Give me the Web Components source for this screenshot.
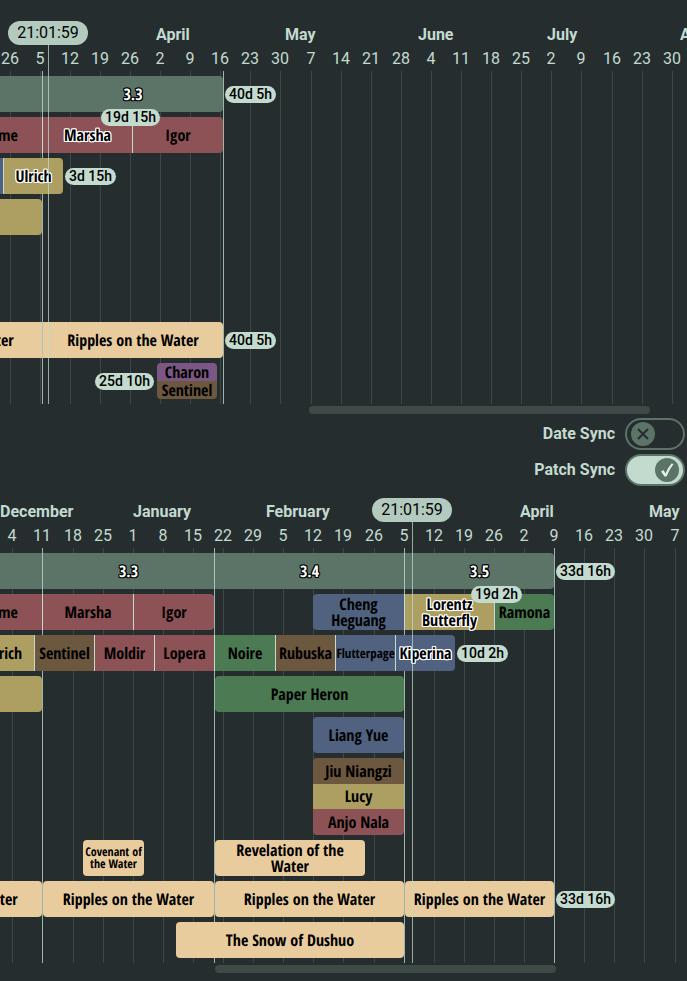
<!DOCTYPE html>
<html lang="en">
<head>
<meta charset="utf-8">
<meta name="viewport" content="width=device-width, initial-scale=1">
<title>Version timeline</title>
<style>
  :root {
    --bg: #262d2f;
    --mint: #c3dbcf;
    --moss: #5c7368;
    --grid: #3c4746;
    --track: #3d4a46;
  }
  body {
    margin: 0;
    background: var(--bg);
    color: var(--mint);
    font: 400 16px/20px Roboto, sans-serif;
  }
</style>
</head>
<body>
<timeline-page>
  <time-line>
    <month-label slot="months" from="156" to="285">April</month-label>
    <month-label slot="months" from="285" to="418">May</month-label>
    <month-label slot="months" from="418" to="547">June</month-label>
    <month-label slot="months" from="547" to="680">July</month-label>
    <month-label slot="months" from="680" to="813">August</month-label>

    <week-tick slot="weeks" from="-5" to="25">26</week-tick>
    <week-tick slot="weeks" from="25" to="55">5</week-tick>
    <week-tick slot="weeks" from="55" to="85">12</week-tick>
    <week-tick slot="weeks" from="85" to="115">19</week-tick>
    <week-tick slot="weeks" from="115" to="145">26</week-tick>
    <week-tick slot="weeks" from="145" to="175">2</week-tick>
    <week-tick slot="weeks" from="175" to="205">9</week-tick>
    <week-tick slot="weeks" from="205" to="235">16</week-tick>
    <week-tick slot="weeks" from="235" to="265">23</week-tick>
    <week-tick slot="weeks" from="265" to="295">30</week-tick>
    <week-tick slot="weeks" from="296" to="326">7</week-tick>
    <week-tick slot="weeks" from="326" to="356">14</week-tick>
    <week-tick slot="weeks" from="356" to="386">21</week-tick>
    <week-tick slot="weeks" from="386" to="416">28</week-tick>
    <week-tick slot="weeks" from="416" to="446">4</week-tick>
    <week-tick slot="weeks" from="446" to="476">11</week-tick>
    <week-tick slot="weeks" from="476" to="506">18</week-tick>
    <week-tick slot="weeks" from="506" to="536">25</week-tick>
    <week-tick slot="weeks" from="536" to="566">2</week-tick>
    <week-tick slot="weeks" from="566" to="596">9</week-tick>
    <week-tick slot="weeks" from="597" to="627">16</week-tick>
    <week-tick slot="weeks" from="627" to="657">23</week-tick>
    <week-tick slot="weeks" from="657" to="687">30</week-tick>

    <version-line slot="lines" at="42"></version-line>
    <version-line slot="lines" at="223"></version-line>

    <time-lane>
      <time-bar from="0" to="42" tone="moss"></time-bar>
      <time-bar from="42" to="223" tone="moss" split end version>3.3<time-badge slot="badge" side="after">40d 5h</time-badge></time-bar>
    </time-lane>
    <time-lane>
      <time-bar from="-2" to="42" tone="red" start-text>me</time-bar>
      <time-bar from="42" to="132" tone="red" split active>Marsha<time-badge slot="badge" side="corner">19d 15h</time-badge></time-bar>
      <time-bar from="132" to="223" tone="red" split end>Igor</time-bar>
    </time-lane>
    <time-lane>
      <time-bar from="0" to="3" tone="blue"></time-bar>
      <time-bar from="3" to="63" tone="gold" split end active>Ulrich<time-badge slot="badge" side="after">3d 15h</time-badge></time-bar>
    </time-lane>
    <time-lane>
      <time-bar from="0" to="42" tone="gold" end></time-bar>
    </time-lane>
    <time-lane></time-lane>
    <time-lane></time-lane>
    <time-lane>
      <time-bar from="-146" to="42" tone="sand">Ripples on the Water</time-bar>
      <time-bar from="42" to="223" tone="sand" split end>Ripples on the Water<time-badge slot="badge" side="after">40d 5h</time-badge></time-bar>
    </time-lane>
    <time-lane>
      <bar-stack from="157" to="217">
        <time-bar tone="purple">Charon</time-bar>
        <time-bar tone="brown">Sentinel</time-bar>
        <time-badge slot="badge" side="before">25d 10h</time-badge>
      </bar-stack>
    </time-lane>

    <now-marker slot="now" at="48">21:01:59</now-marker>
    <scroll-track slot="scroll" before="309" thumb="341" after="37"></scroll-track>
  </time-line>

  <sync-options>
    <sync-switch label="Date Sync"></sync-switch>
    <sync-switch label="Patch Sync" on></sync-switch>
  </sync-options>

  <time-line>
    <month-label slot="months" from="0" to="133">December</month-label>
    <month-label slot="months" from="133" to="266">January</month-label>
    <month-label slot="months" from="266" to="387">February</month-label>
    <month-label slot="months" from="520" to="649">April</month-label>
    <month-label slot="months" from="649" to="782">May</month-label>

    <week-tick slot="weeks" from="-3" to="27">4</week-tick>
    <week-tick slot="weeks" from="27" to="57">11</week-tick>
    <week-tick slot="weeks" from="58" to="88">18</week-tick>
    <week-tick slot="weeks" from="88" to="118">25</week-tick>
    <week-tick slot="weeks" from="118" to="148">1</week-tick>
    <week-tick slot="weeks" from="148" to="178">8</week-tick>
    <week-tick slot="weeks" from="178" to="208">15</week-tick>
    <week-tick slot="weeks" from="208" to="238">22</week-tick>
    <week-tick slot="weeks" from="238" to="268">29</week-tick>
    <week-tick slot="weeks" from="268" to="298">5</week-tick>
    <week-tick slot="weeks" from="298" to="328">12</week-tick>
    <week-tick slot="weeks" from="328" to="358">19</week-tick>
    <week-tick slot="weeks" from="359" to="389">26</week-tick>
    <week-tick slot="weeks" from="389" to="419">5</week-tick>
    <week-tick slot="weeks" from="419" to="449">12</week-tick>
    <week-tick slot="weeks" from="449" to="479">19</week-tick>
    <week-tick slot="weeks" from="479" to="509">26</week-tick>
    <week-tick slot="weeks" from="509" to="539">2</week-tick>
    <week-tick slot="weeks" from="539" to="569">9</week-tick>
    <week-tick slot="weeks" from="569" to="599">16</week-tick>
    <week-tick slot="weeks" from="599" to="629">23</week-tick>
    <week-tick slot="weeks" from="629" to="659">30</week-tick>
    <week-tick slot="weeks" from="660" to="690">7</week-tick>

    <version-line slot="lines" at="42"></version-line>
    <version-line slot="lines" at="214"></version-line>
    <version-line slot="lines" at="404"></version-line>
    <version-line slot="lines" at="554"></version-line>

    <time-lane>
      <time-bar from="0" to="42" tone="moss"></time-bar>
      <time-bar from="42" to="214" tone="moss" split version>3.3</time-bar>
      <time-bar from="214" to="404" tone="moss" split version>3.4</time-bar>
      <time-bar from="404" to="554" tone="moss" split end version>3.5<time-badge slot="badge" side="after">33d 16h</time-badge></time-bar>
    </time-lane>
    <time-lane>
      <time-bar from="-2" to="42" tone="red" start-text>me</time-bar>
      <time-bar from="42" to="133" tone="red" split>Marsha</time-bar>
      <time-bar from="133" to="214" tone="red" split end>Igor</time-bar>
      <time-bar from="313" to="404" tone="blue" start>Cheng Heguang</time-bar>
      <time-bar from="404" to="494" tone="gold" split active>Lorentz Butterfly<time-badge slot="badge" side="corner">19d 2h</time-badge></time-bar>
      <time-bar from="494" to="554" tone="green" split end>Ramona</time-bar>
    </time-lane>
    <time-lane>
      <time-bar from="-26" to="34" tone="gold">Ulrich</time-bar>
      <time-bar from="34" to="94" tone="brown" split>Sentinel</time-bar>
      <time-bar from="94" to="154" tone="red" split>Moldir</time-bar>
      <time-bar from="154" to="214" tone="red" split>Lopera</time-bar>
      <time-bar from="214" to="275" tone="green" split>Noire</time-bar>
      <time-bar from="275" to="335" tone="brown" split>Rubuska</time-bar>
      <time-bar from="335" to="395" tone="blue" split medium>Flutterpage</time-bar>
      <time-bar from="395" to="455" tone="blue" split end active>Kiperina<time-badge slot="badge" side="after">10d 2h</time-badge></time-bar>
    </time-lane>
    <time-lane>
      <time-bar from="0" to="42" tone="gold" end></time-bar>
      <time-bar from="215" to="404" tone="green" start end>Paper Heron</time-bar>
    </time-lane>
    <time-lane>
      <time-bar from="313" to="404" tone="blue" start end>Liang Yue</time-bar>
    </time-lane>
    <time-lane>
      <bar-stack from="313" to="404">
        <time-bar tone="brown">Jiu Niangzi</time-bar>
        <time-bar tone="gold">Lucy</time-bar>
        <time-bar tone="red">Anjo Nala</time-bar>
      </bar-stack>
    </time-lane>
    <time-lane>
      <time-bar from="83" to="144" tone="sand" start end small>Covenant of the Water</time-bar>
      <time-bar from="215" to="365" tone="sand" start end>Revelation of the Water</time-bar>
    </time-lane>
    <time-lane>
      <time-bar from="-138" to="42" tone="sand" end>Ripples on the Water</time-bar>
      <time-bar from="43" to="214" tone="sand" start end>Ripples on the Water</time-bar>
      <time-bar from="215" to="404" tone="sand" start end>Ripples on the Water</time-bar>
      <time-bar from="405" to="554" tone="sand" start end>Ripples on the Water<time-badge slot="badge" side="after">33d 16h</time-badge></time-bar>
    </time-lane>
    <time-lane>
      <time-bar from="176" to="404" tone="sand" start end>The Snow of Dushuo</time-bar>
    </time-lane>

    <now-marker slot="now" at="412">21:01:59</now-marker>
    <scroll-track slot="scroll" before="215" thumb="341" after="131"></scroll-track>
  </time-line>
</timeline-page>

<script>
  const shadow = (host, html) => {
    const root = host.attachShadow({ mode: 'open' });
    const t = document.createElement('template');
    t.innerHTML = html;
    root.append(t.content.cloneNode(true));
    return root;
  };
  const num = (el, name) => Number(el.getAttribute(name) || 0);

  // An item with a time span; it follows its previous sibling in the same flex row.
  class SpanElement extends HTMLElement {
    connectedCallback() {
      if (!this.hasAttribute('to')) return;
      const prev = this.previousElementSibling;
      const same = prev && prev.localName === this.localName;
      this.style.setProperty('--gap', num(this, 'from') - (same ? num(prev, 'to') : 0) + 'px');
      this.style.setProperty('--span', num(this, 'to') - num(this, 'from') + 'px');
    }
  }

  customElements.define('timeline-page', class extends HTMLElement {
    constructor() {
      super();
      shadow(this, `<style>
        :host { display: block; padding: 12px 0 8px; overflow: hidden; }
        main { display: flex; flex-direction: column; }
      </style><main><slot></slot></main>`);
    }
  });

  customElements.define('time-line', class extends HTMLElement {
    constructor() {
      super();
      shadow(this, `<style>
        :host { display: block; }
        .chart { position: relative; padding-top: 13px; overflow: hidden; }
        .months { display: flex; height: 20px; margin-bottom: 4px; }
        .plot { display: grid; grid-template-columns: minmax(0, 1fr); }
        .weeks, .lines, .lanes { grid-area: 1 / 1; }
        .weeks { display: flex; }
        .lines { position: relative; margin-top: 22px; }
        .lanes { position: relative; display: grid; grid-template-columns: minmax(0, 1fr); gap: 5px; padding: 27px 0 5px; }
      </style>
      <section class="chart">
        <div class="months"><slot name="months"></slot></div>
        <div class="plot">
          <div class="weeks"><slot name="weeks"></slot></div>
          <div class="lines"><slot name="lines"></slot></div>
          <div class="lanes"><slot></slot></div>
        </div>
        <slot name="now"></slot>
      </section>
      <slot name="scroll"></slot>`);
    }
  });

  customElements.define('month-label', class extends SpanElement {
    constructor() {
      super();
      shadow(this, `<style>
        :host { flex: none; width: var(--span); margin-left: var(--gap); font-weight: 700; }
      </style><slot></slot>`);
    }
  });

  customElements.define('week-tick', class extends SpanElement {
    constructor() {
      super();
      shadow(this, `<style>
        :host { flex: none; display: flex; flex-direction: column; align-items: center; gap: 2px; width: var(--span); margin-left: var(--gap); }
        i { flex: 1; width: 1px; margin-left: 1px; background: var(--grid); }
      </style><span><slot></slot></span><i></i>`);
    }
  });

  customElements.define('version-line', class extends HTMLElement {
    constructor() {
      super();
      shadow(this, `<style>
        :host { position: absolute; top: 0; bottom: 0; left: var(--at); width: 1px; background: #9eb5ac; }
      </style>`);
    }
    connectedCallback() { this.style.setProperty('--at', num(this, 'at') + 'px'); }
  });

  customElements.define('now-marker', class extends HTMLElement {
    constructor() {
      super();
      shadow(this, `<style>
        :host { position: absolute; top: 9px; bottom: 0; left: var(--at); width: 1px; display: flex; flex-direction: column; opacity: .9; pointer-events: none; }
        time { flex: none; width: 80px; margin-left: -40px; border-radius: 12px; background: var(--mint); color: #000; line-height: 24px; text-align: center; }
        i { flex: 1; width: 1px; background: var(--mint); opacity: .8; }
      </style><time><slot></slot></time><i></i>`);
    }
    connectedCallback() { this.style.setProperty('--at', num(this, 'at') + 'px'); }
  });

  customElements.define('time-lane', class extends HTMLElement {
    constructor() {
      super();
      shadow(this, `<style>
        :host { display: flex; min-height: 36px; }
      </style><slot></slot>`);
    }
  });

  customElements.define('time-bar', class extends SpanElement {
    constructor() {
      super();
      shadow(this, `<style>
        :host {
          flex: none; position: relative; box-sizing: border-box;
          display: flex; align-items: center; justify-content: center;
          width: var(--span); margin-left: var(--gap); padding: 0 1px;
          background: var(--fill); color: #000; text-align: center;
          font: 700 16px/16px "Open Sans Condensed", "Open Sans", sans-serif;
          text-rendering: geometricPrecision;
        }
        :host([tone="moss"]) { --fill: #5c7368; }
        :host([tone="red"]) { --fill: #8d5255; }
        :host([tone="gold"]) { --fill: #ac9f61; }
        :host([tone="blue"]) { --fill: #50627f; }
        :host([tone="green"]) { --fill: #4b7a53; }
        :host([tone="brown"]) { --fill: #6c573f; }
        :host([tone="purple"]) { --fill: #7d5783; }
        :host([tone="sand"]) { --fill: #e9cc9d; }
        :host([split]) { border-left: 1px solid var(--mint); }
        :host([split][version]), :host([split][tone="sand"]) { border-color: #a9c4b8; }
        :host([start]) { border-top-left-radius: 4px; border-bottom-left-radius: 4px; }
        :host([end]) { border-top-right-radius: 4px; border-bottom-right-radius: 4px; }
        :host([start-text]) { justify-content: flex-start; padding: 0; }
        :host([medium]) { padding: 0; font-size: 13px; }
        :host([small]) { font-size: 12px; line-height: 12px; }
        :host([active]) span {
          text-shadow: 1px 0 #fff, -1px 0 #fff, 0 1px #fff, 0 -1px #fff, 1px 1px #fff, -1px -1px #fff, 1px -1px #fff, -1px 1px #fff;
        }
        :host([version]) span {
          color: #fff;
          text-shadow: 1px 0 #000, -1px 0 #000, 0 1px #000, 0 -1px #000, 1px 1px #000, -1px -1px #000, 1px -1px #000, -1px 1px #000;
        }
      </style><span><slot></slot></span><slot name="badge"></slot>`);
    }
  });

  customElements.define('bar-stack', class extends SpanElement {
    constructor() {
      super();
      shadow(this, `<style>
        :host { flex: none; position: relative; width: var(--span); margin-left: var(--gap); }
        div { display: grid; grid-auto-rows: minmax(18px, 1fr); height: 100%; border-radius: 4px; overflow: hidden; }
        :host(.tall) div { height: 77px; }
        ::slotted(time-bar) { width: auto; margin-left: 0; }
      </style><div><slot></slot></div><slot name="badge"></slot>`);
    }
    connectedCallback() {
      super.connectedCallback();
      queueMicrotask(() => this.classList.toggle('tall', this.querySelectorAll('time-bar').length > 2));
    }
  });

  customElements.define('time-badge', class extends HTMLElement {
    constructor() {
      super();
      shadow(this, `<style>
        :host {
          position: absolute; z-index: 1; padding: 0 4px; border-radius: 9px;
          background: var(--mint); color: #000; white-space: nowrap;
          font: 500 14px/17px Roboto, sans-serif; text-rendering: auto;
        }
        :host([side="after"]) { left: calc(100% + 2px); }
        :host([side="before"]) { right: calc(100% + 3px); top: 10px; }
        :host([side="corner"]) { right: -28px; top: -8px; }
      </style><slot></slot>`);
    }
  });

  customElements.define('scroll-track', class extends HTMLElement {
    constructor() {
      super();
      shadow(this, `<style>
        :host { display: flex; height: 8px; margin-top: 2px; }
        i { flex: var(--n) 1 0; }
        .thumb { border-radius: 4px; background: var(--track); }
      </style><i></i><i class="thumb"></i><i></i>`);
    }
    connectedCallback() {
      const parts = this.shadowRoot.querySelectorAll('i');
      ['before', 'thumb', 'after'].forEach((n, k) => parts[k].style.setProperty('--n', num(this, n)));
    }
  });

  customElements.define('sync-options', class extends HTMLElement {
    constructor() {
      super();
      shadow(this, `<style>
        :host { display: flex; flex-direction: column; align-items: flex-end; gap: 4px; padding: 4px 2px 3px; }
      </style><slot></slot>`);
    }
  });

  customElements.define('sync-switch', class extends HTMLElement {
    constructor() {
      super();
      const root = shadow(this, `<style>
        :host { display: block; font-weight: 700; }
        label { display: flex; align-items: center; gap: 10px; cursor: pointer; }
        .switch { display: grid; align-items: center; }
        input, .knob { grid-area: 1 / 1; }
        input {
          appearance: none; box-sizing: border-box; width: 60px; height: 32px; margin: 0;
          border: 2px solid var(--moss); border-radius: 16px; background: var(--bg); cursor: pointer;
        }
        input:checked { background: var(--mint); }
        .knob { width: 24px; height: 24px; margin: 0 6px; pointer-events: none; }
        circle { fill: var(--moss); }
        .no { fill: none; stroke: var(--bg); stroke-width: 2; }
        .yes { display: none; fill: #e6f0ea; }
        input:checked + .knob { justify-self: end; }
        input:checked + .knob .yes { display: inline; }
        input:checked + .knob .no { display: none; }
      </style>
      <label><span class="text"></span>
        <span class="switch"><input type="checkbox" role="switch">
          <svg class="knob" viewBox="0 0 24 24" aria-hidden="true">
            <circle cx="12" cy="12" r="12"/>
            <path class="no" d="M7 7l10 10M17 7L7 17"/>
            <path class="yes" d="M6 13.500L8.500 12l2 3.500Q13 9.500 16.500 5.500L18.500 6Q14 12 11.500 18.500H9.500Z"/>
          </svg>
        </span>
      </label>`);
      this.input = root.querySelector('input');
      this.text = root.querySelector('.text');
    }
    connectedCallback() {
      this.text.textContent = this.getAttribute('label');
      this.input.checked = this.hasAttribute('on');
    }
  });
</script>
</body>
</html>
